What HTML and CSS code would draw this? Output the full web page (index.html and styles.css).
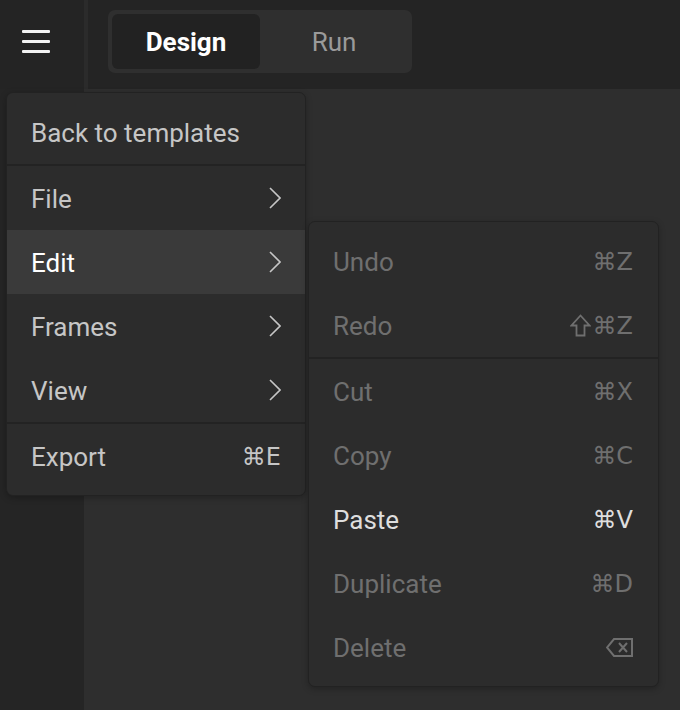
FILE: index.html
```html
<!DOCTYPE html>
<html lang="en">
<head>
<meta charset="utf-8">
<title>Editor</title>
<link rel="stylesheet" href="styles.css">
</head>
<body>
<div class="app">
  <div class="corner">
    <button class="hamburger" aria-label="Menu">
      <span></span><span></span><span></span>
    </button>
  </div>
  <header class="topbar">
    <div class="segmented">
      <button class="seg active">Design</button>
      <button class="seg">Run</button>
    </div>
  </header>
  <aside class="sidebar"></aside>
  <main class="canvas"></main>

  <div class="menus">
    <ul class="menu main-menu">
      <li class="item">Back to templates</li>
      <li class="sep"></li>
      <li class="item">File
        <svg class="chev" viewBox="0 0 12 22"><polyline points="1,1 11,11 1,21"/></svg>
      </li>
      <li class="item hover">Edit
        <svg class="chev" viewBox="0 0 12 22"><polyline points="1,1 11,11 1,21"/></svg>
      </li>
      <li class="item">Frames
        <svg class="chev" viewBox="0 0 12 22"><polyline points="1,1 11,11 1,21"/></svg>
      </li>
      <li class="item">View
        <svg class="chev" viewBox="0 0 12 22"><polyline points="1,1 11,11 1,21"/></svg>
      </li>
      <li class="sep"></li>
      <li class="item">Export <span class="kbd">⌘E</span></li>
    </ul>

    <ul class="menu sub-menu">
      <li class="item disabled">Undo <span class="kbd">⌘Z</span></li>
      <li class="item disabled">Redo
        <span class="kbd">
          <svg class="shift" viewBox="0 0 21 23"><path d="M10.5 1.5 L19.5 11.5 H14.5 V21.5 H6.5 V11.5 H1.5 Z"/></svg>⌘Z
        </span>
      </li>
      <li class="sep"></li>
      <li class="item disabled">Cut <span class="kbd">⌘X</span></li>
      <li class="item disabled">Copy <span class="kbd">⌘C</span></li>
      <li class="item enabled">Paste <span class="kbd">⌘V</span></li>
      <li class="item disabled">Duplicate <span class="kbd">⌘D</span></li>
      <li class="item disabled">Delete
        <svg class="del" viewBox="0 0 27 19"><path d="M8 1 H26 V18 H8 L1 9.5 Z"/><path d="M13 5 L21 14 M21 5 L13 14"/></svg>
      </li>
    </ul>
  </div>
</div>
</body>
</html>
```

FILE: styles.css
```css
* { box-sizing: border-box; }

html, body {
  margin: 0;
  padding: 0;
  width: 680px;
  height: 710px;
  overflow: hidden;
  background: #2e2e2e;
  font-family: Roboto, "Noto Sans", "DejaVu Sans", sans-serif;
}

.app {
  position: relative;
  display: grid;
  grid-template-columns: 84px 1fr;
  grid-template-rows: 89px 1fr;
  width: 680px;
  height: 710px;
}

.corner {
  background: #242424;
  display: flex;
  align-items: flex-start;
  padding: 30px 0 0 22px;
}

.hamburger {
  display: flex;
  flex-direction: column;
  gap: 7.5px;
  width: 28px;
  padding: 0;
  margin: 0;
  border: 0;
  background: none;
}

.hamburger span {
  display: block;
  height: 2.5px;
  border-radius: 1px;
  background: #f2f2f2;
}

.topbar {
  background: #242424;
  border-left: 4px solid #2b2b2b;
  display: flex;
  align-items: flex-start;
  padding: 10px 0 0 20px;
}

.segmented {
  display: flex;
  width: 304px;
  height: 63px;
  padding: 4px;
  border-radius: 7px;
  background: #2f2f2f;
}

.seg {
  flex: 0 0 148px;
  border: 0;
  border-radius: 6px;
  background: none;
  color: #9a9a9a;
  font-family: Roboto, sans-serif;
  font-size: 26px;
  font-weight: 400;
  padding: 0;
}

.seg + .seg { flex: 1; }

.seg.active {
  background: #222222;
  color: #ffffff;
  font-weight: 700;
}

.sidebar { background: #252525; }
.canvas { background: #2e2e2e; }

/* Drop-down menus layered over the editor */
.menus {
  position: absolute;
  left: 6px;
  top: 92px;
}

.menu {
  list-style: none;
  margin: 0;
  padding: 7px 0;
  background: #2c2c2c;
  border: 1px solid #222222;
  border-radius: 7px;
  box-shadow: 0 2px 6px rgba(0, 0, 0, 0.25);
}

.main-menu { width: 300px; }

.sub-menu {
  position: absolute;
  left: 302px;
  top: 129px;
  width: 351px;
}

.item {
  display: flex;
  align-items: center;
  justify-content: space-between;
  height: 64px;
  padding: 2px 24px 0 24px;
  font-size: 26px;
  color: #c6c6c6;
}

.item.hover {
  background: #3a3a3a;
  color: #ffffff;
}

.sep {
  height: 2px;
  background: #232323;
}

.chev {
  width: 12px;
  height: 22px;
  margin-top: -2px;
  fill: none;
  stroke: #c6c6c6;
  stroke-width: 1.6;
}

.kbd {
  display: flex;
  align-items: center;
  gap: 2px;
  font-family: "DejaVu Sans", Roboto, sans-serif;
  font-size: 24px;
  letter-spacing: 0;
}

.sub-menu .item { padding: 2px 25px 0 24px; }

.item.disabled { color: #6f6f6f; }
.item.enabled { color: #dedede; }

.shift {
  width: 21px;
  height: 23px;
  margin-top: -2px;
  fill: none;
  stroke: currentColor;
  stroke-width: 1.8;
  stroke-linejoin: miter;
}

.del {
  width: 27px;
  height: 19px;
  margin-top: -2px;
  fill: none;
  stroke: currentColor;
  stroke-width: 2;
}
```
